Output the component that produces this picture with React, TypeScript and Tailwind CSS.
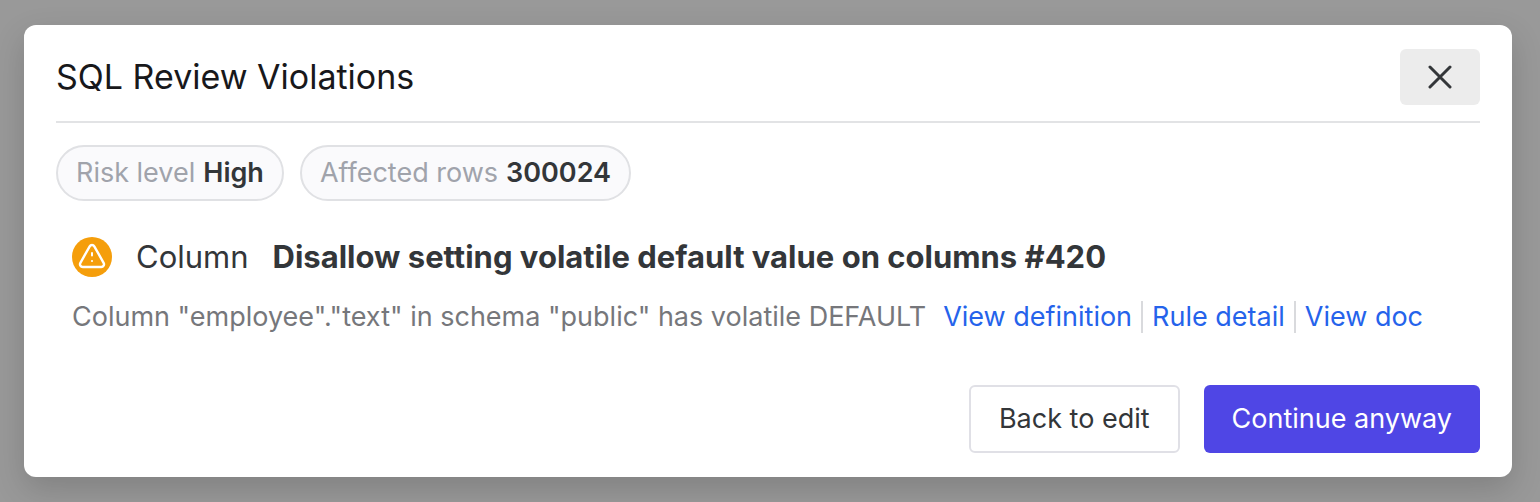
import type { ReactNode } from "react";

function Pill({ label, value }: { label: string; value: string }) {
  return (
    <li className="flex h-14 items-center gap-2 rounded-full border-2 border-[#e0e1e4] bg-[#fafafc] px-[18px] text-[27px] leading-10">
      <span className="text-[#a0a3ab]">{label}</span>
      <span className="font-semibold text-[#333639]">{value}</span>
    </li>
  );
}

function TextLink({ children }: { children: ReactNode }) {
  return (
    <a href="#" className="border-l-2 border-[#d9dadd] px-[9px] text-[#2563eb] first:border-l-0 hover:underline">
      {children}
    </a>
  );
}

function WarningIcon() {
  return (
    <svg viewBox="0 0 40 40" className="size-10 shrink-0" fill="none" aria-hidden="true">
      <circle cx="20" cy="20" r="20" fill="#f59e0b" />
      <path
        d="M17.7 9.3 8.4 25.8c-1.1 2 .2 4.2 2.4 4.2h18.4c2.2 0 3.5-2.2 2.4-4.2L22.3 9.3c-1-1.8-3.6-1.8-4.6 0Z"
        stroke="white"
        strokeWidth="2.4"
        strokeLinejoin="round"
      />
      <path d="M20 16v2.6M20 24h.01" stroke="white" strokeWidth="2" strokeLinecap="round" />
    </svg>
  );
}

export default function App() {
  return (
    <div className="min-h-screen bg-[#999999] py-[25px] pr-7 pl-6 font-['Inter',sans-serif]">
      <section
        role="dialog"
        aria-labelledby="dialog-title"
        className="rounded-xl bg-white px-8 py-6 shadow-[0_12px_32px_rgba(0,0,0,0.16)]"
      >
        <header className="flex items-center justify-between border-b-2 border-[#e2e3e5] pb-4">
          <h1 id="dialog-title" className="text-[34px] leading-14 text-[#18181b]">
            SQL Review Violations
          </h1>
          <button
            type="button"
            aria-label="Close"
            className="flex h-14 w-20 items-center justify-center rounded-md bg-[#ececec] text-[#333639]"
          >
            <svg viewBox="0 0 24 24" className="size-6" fill="none" aria-hidden="true">
              <path d="m2 2 20 20M22 2 2 22" stroke="currentColor" strokeWidth="3" strokeLinecap="round" />
            </svg>
          </button>
        </header>

        <ul className="mt-[22px] flex flex-wrap gap-4">
          <Pill label="Risk level" value="High" />
          <Pill label="Affected rows" value="300024" />
        </ul>

        <div className="mt-9 px-4">
          <h2 className="flex items-center gap-6 text-[31px] leading-10 text-[#333639]">
            <WarningIcon />
            <span>Column</span>
            <span className="font-bold">Disallow setting volatile default value on columns #420</span>
          </h2>
          <div className="mt-6 flex flex-wrap gap-x-2 text-[27px] leading-8 text-[#76777b]">
            <p>Column "employee"."text" in schema "public" has volatile DEFAULT</p>
            <nav aria-label="Violation links" className="flex">
              <TextLink>View definition</TextLink>
              <TextLink>Rule detail</TextLink>
              <TextLink>View doc</TextLink>
            </nav>
          </div>
        </div>

        <footer className="mt-[52px] flex justify-end gap-6 text-[27px] leading-10">
          <button type="button" className="h-17 rounded-md border-2 border-[#e0e0e6] px-7 text-[#333639]">
            Back to edit
          </button>
          <button type="button" className="h-17 rounded-md bg-[#4f46e5] px-7 text-white">
            Continue anyway
          </button>
        </footer>
      </section>
    </div>
  );
}
